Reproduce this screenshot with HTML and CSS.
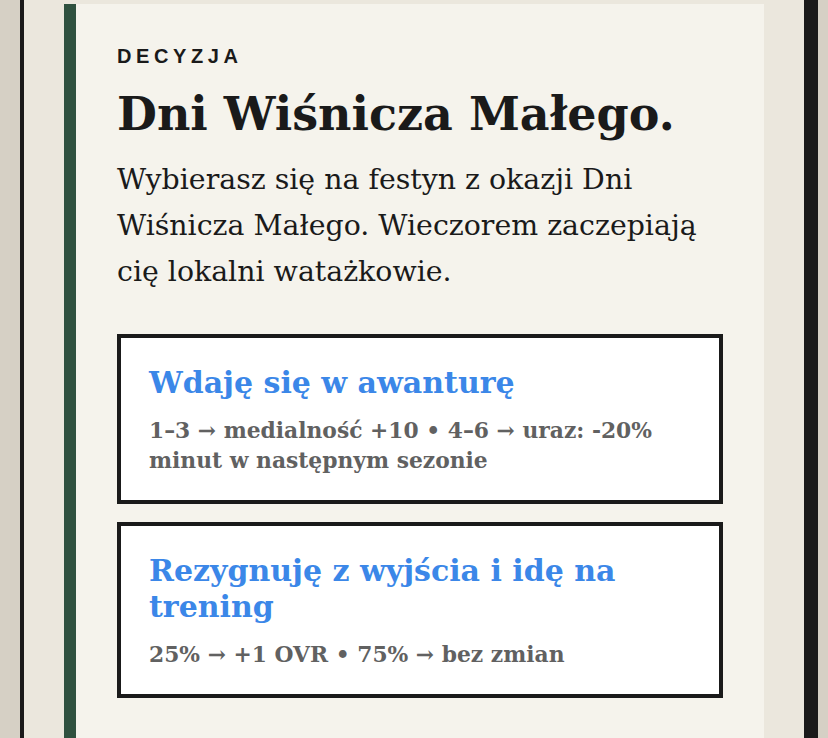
FILE: index.html
```html
<!DOCTYPE html>
<html lang="pl">
<head>
  <meta charset="UTF-8">
  <meta name="viewport" content="width=device-width, initial-scale=1.0">
  <title>Decyzja</title>
  <link rel="stylesheet" href="styles.css">
</head>
<body>
  <div class="frame">
    <section class="event-card">
      <p class="label">Decyzja</p>
      <h1 class="event-title">Dni Wiśnicza Małego.</h1>
      <p class="event-text">Wybierasz się na festyn z okazji Dni Wiśnicza Małego. Wieczorem zaczepiają cię lokalni watażkowie.</p>

      <div class="choices">
        <button class="choice">
          <span class="choice-title">Wdaję się w awanturę</span>
          <span class="choice-odds">1–3 → medialność +10 • 4–6 → uraz: -20% minut w następnym sezonie</span>
        </button>
        <button class="choice">
          <span class="choice-title">Rezygnuję z wyjścia i idę na trening</span>
          <span class="choice-odds">25% → +1 OVR • 75% → bez zmian</span>
        </button>
      </div>
    </section>
  </div>
</body>
</html>
```

FILE: styles.css
```css
body {
  margin: 0;
  background-color: #d6d0c5;
  overflow: hidden;
  height: 100vh;
}

.frame {
  box-sizing: border-box;
  margin-left: 20px;
  width: 788px;
  min-height: 900px;
  padding: 4px 40px 40px;
  background-color: #ebe7dd;
  border-left: 4px solid #1a1a1a;
  border-right: 4px solid #1a1a1a;
  box-shadow: 10px 0 0 #1a1a1a;
}

.event-card {
  background-color: #f5f3ec;
  border-left: 12px solid #2f513f;
  padding: 40px 41px 48px 41px;
  color: #1a1a1a;
}

.label {
  margin: 0 0 18px;
  font-family: "Liberation Sans", Arial, sans-serif;
  font-weight: bold;
  font-size: 20px;
  line-height: 24px;
  letter-spacing: 4.6px;
  text-transform: uppercase;
}

.event-title {
  margin: 0 0 15px;
  font-family: "DejaVu Serif", Georgia, serif;
  font-size: 46px;
  line-height: 56px;
  font-weight: bold;
}

.event-text {
  margin: 0;
  font-family: "DejaVu Serif", Georgia, serif;
  font-size: 28.4px;
  line-height: 46px;
}

.choices {
  display: flex;
  flex-direction: column;
  gap: 18px;
  margin-top: 39px;
}

.choice {
  display: flex;
  flex-direction: column;
  gap: 15px;
  padding: 27px 28px 24px;
  background-color: #fff;
  border: 4px solid #1a1a1a;
  border-radius: 0;
  text-align: left;
  cursor: pointer;
  font-family: "DejaVu Serif", Georgia, serif;
}

.choice-title {
  color: #3b87e8;
  font-size: 30px;
  line-height: 36px;
  font-weight: bold;
}

.choice-odds {
  color: #616161;
  font-size: 21.8px;
  line-height: 30px;
  font-weight: bold;
}
```
